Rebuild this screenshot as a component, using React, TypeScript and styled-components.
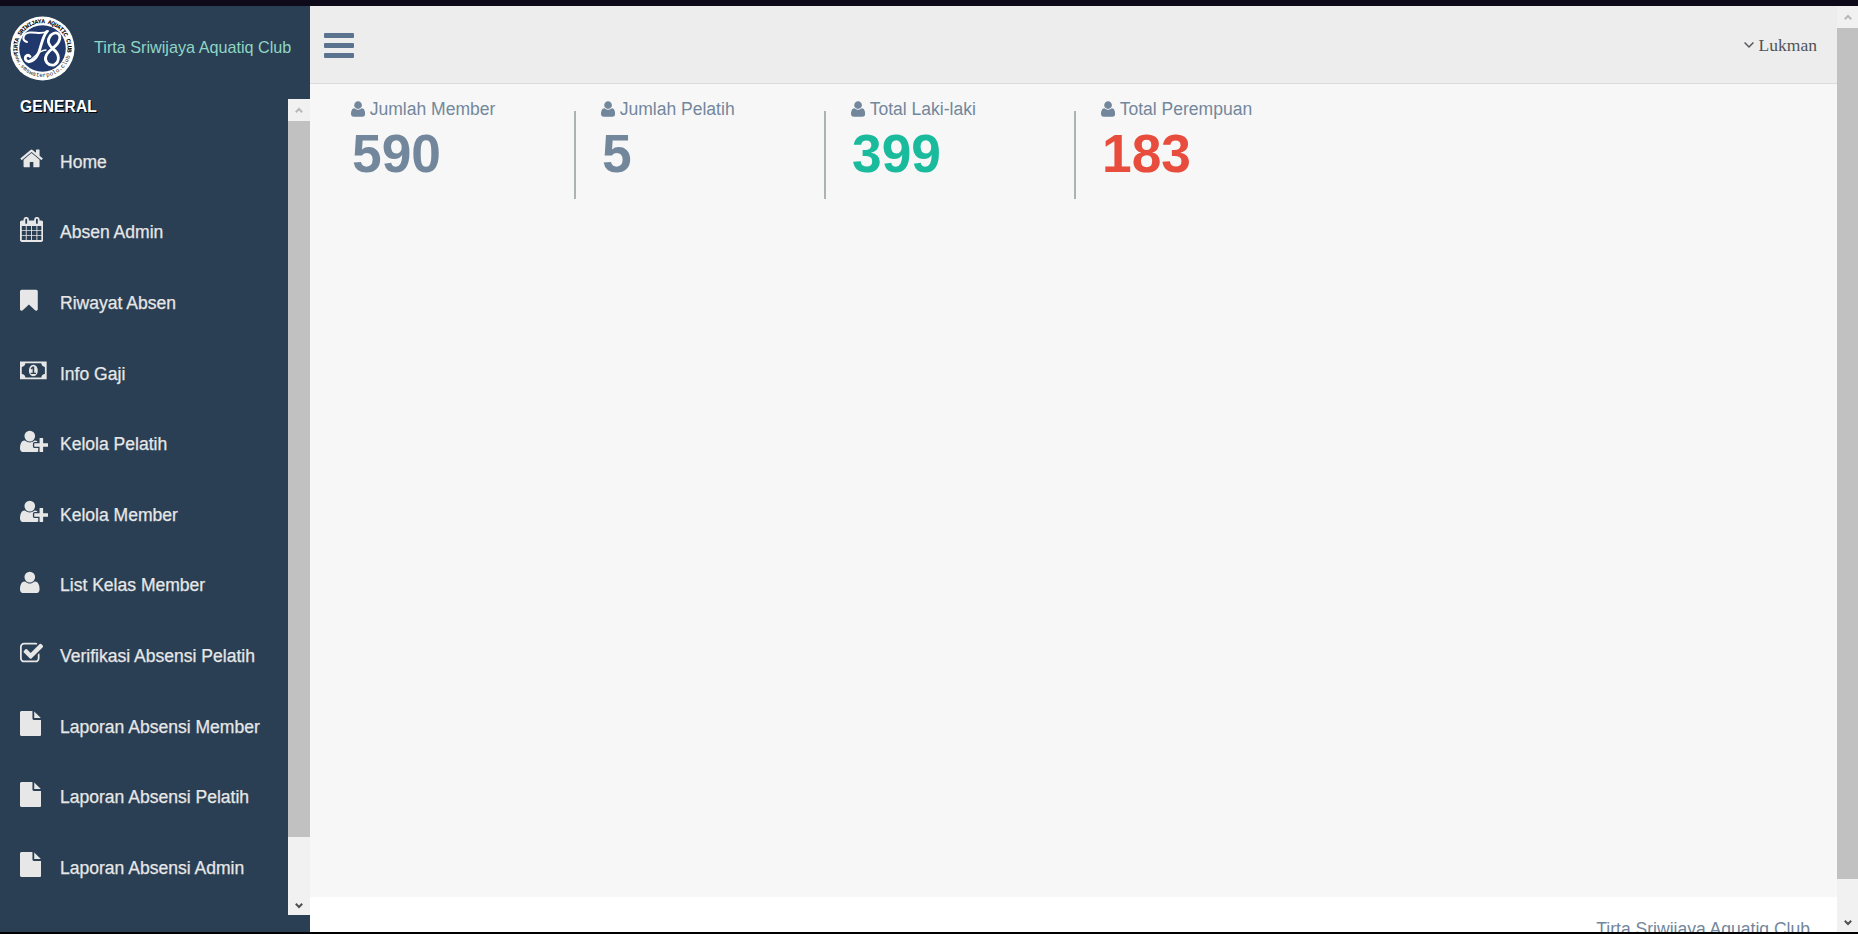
import React from "react";
import styled, { createGlobalStyle } from "styled-components";

const GlobalStyle = createGlobalStyle`
  * { box-sizing: border-box; }
  html, body { margin: 0; padding: 0; }
  body {
    height: 934px;
    overflow: hidden;
    font-family: "Liberation Sans", Arial, sans-serif;
    font-size: 17.55px;
    color: #73879c;
    background: #000;
  }
`;

const Screen = styled.div`
  display: flex;
  width: 1858px;
  height: 934px;
  border-top: 6px solid #0e0a1a;
  border-bottom: 2px solid #000;
  overflow: hidden;
`;

const Sidebar = styled.aside`
  display: flex;
  flex-direction: column;
  flex: none;
  width: 310px;
  background: #2a3f54;
`;

const Brand = styled.div`
  display: flex;
  align-items: center;
  gap: 19px;
  height: 93px;
  padding: 0 0 8px 10px;
`;

const BrandName = styled.span`
  font-size: 16.2px;
  line-height: 20px;
  color: #8fd6c4;
  white-space: nowrap;
  margin-top: -4px;
`;

const MenuArea = styled.div`
  display: flex;
  height: 816px;
`;

const Menu = styled.nav`
  flex: 1;
  min-width: 0;
  margin-top: -5px;
`;

const MenuTitle = styled.h3`
  margin: 0;
  padding-left: 20px;
  height: 32.5px;
  font-size: 15.6px;
  line-height: 26px;
  letter-spacing: 0.1px;
  font-weight: bold;
  color: #fff;
  text-shadow: 1px 1px #000;
`;

const MenuItem = styled.a`
  display: flex;
  align-items: center;
  height: 70.6px;
  padding-left: 20px;
  color: #e7e7e7;
  white-space: nowrap;
`;

const IconSlot = styled.span`
  display: flex;
  width: 40px;
  margin-top: -6px;
`;

const MenuLabel = styled.span`
  line-height: 24px;
  -webkit-text-stroke: 0.25px currentColor;
`;

const Glyph = styled.svg<{ $w: number; $h: number }>`
  display: block;
  flex: none;
  width: ${(p) => p.$w}px;
  height: ${(p) => p.$h}px;
  fill: currentColor;
`;

const Scrollbar = styled.div<{ $w: number }>`
  display: flex;
  flex-direction: column;
  flex: none;
  width: ${(p) => p.$w}px;
  background: #f1f1f1;
`;

const ScrollArrow = styled.div<{ $active?: boolean }>`
  display: flex;
  align-items: center;
  justify-content: center;
  height: ${(p) => (p.$active ? 19 : 22)}px;
  color: ${(p) => (p.$active ? "#505050" : "#b8b8b8")};
`;

const ScrollThumb = styled.div<{ $h: number }>`
  height: ${(p) => p.$h}px;
  margin-bottom: auto;
  background: #c1c1c1;
`;

const Main = styled.main`
  display: flex;
  flex-direction: column;
  flex: 1;
  min-width: 0;
  overflow: hidden;
  background: #f7f7f7;
`;

const TopNav = styled.header`
  display: flex;
  justify-content: space-between;
  align-items: center;
  flex: none;
  height: 78px;
  padding: 1px 20px 0 14px;
  background: #ededed;
  border-bottom: 1px solid #d9dbdd;
`;

const UserMenu = styled.div`
  display: flex;
  align-items: center;
  gap: 5px;
  margin-top: -1px;
  color: #515356;
  font-family: "Liberation Serif", "Times New Roman", serif;
  font-size: 17.55px;
  line-height: 22px;
`;

const Stats = styled.section`
  display: flex;
  flex: 1;
  padding: 12px 0 0 27px;
`;

const Stat = styled.div`
  position: relative;
  width: 250px;
  padding-left: 14px;
  & + &::before {
    content: "";
    position: absolute;
    left: -13px;
    top: 15px;
    width: 2px;
    height: 88px;
    background: #adb2b5;
  }
`;

const StatLabel = styled.div`
  display: flex;
  align-items: center;
  gap: 4.5px;
  height: 26px;
  white-space: nowrap;
`;

const StatValue = styled.div<{ $color?: string }>`
  padding-left: 1px;
  font-size: 53.3px;
  line-height: 64px;
  font-weight: bold;
  color: ${(p) => p.$color || "#73879c"};
`;

const Footer = styled.footer`
  flex: none;
  height: 35px;
  padding: 20px 27px 0 0;
  background: #fff;
  text-align: right;
  line-height: 24px;
  overflow: hidden;
`;

type IconName = "home" | "calendar" | "bookmark" | "money" | "userPlus" | "user" | "check" | "file";

const icons: Record<IconName, { x: number; w: number; d: string }> = {
  home: {
    x: 64, w: 1664,
    d: "M1472 992v480q0 26-19 45t-45 19h-384v-384h-256v384h-384q-26 0-45-19t-19-45v-480q0-1 .5-3t.5-3l575-474 575 474q1 2 1 6zm223-69l-62 74q-8 9-21 11h-3q-13 0-21-7l-692-577-692 577q-12 8-24 7-13-2-21-11l-62-74q-8-10-7-23.5t11-21.5l719-599q32-26 76-26t76 26l244 204v-195q0-14 9-23t23-9h192q14 0 23 9t9 23v408l219 182q10 8 11 21.5t-7 23.5z",
  },
  calendar: {
    x: 64, w: 1664,
    d: "M192 1664h288v-288h-288v288zm352 0h320v-288h-320v288zm-352-352h288v-320h-288v320zm352 0h320v-320h-320v320zm-352-384h288v-288h-288v288zm736 736h320v-288h-320v288zm-384-736h320v-288h-320v288zm768 736h288v-288h-288v288zm-384-352h320v-320h-320v320zm-352-864v-288q0-13-9.5-22.5t-22.5-9.5h-64q-13 0-22.5 9.5t-9.5 22.5v288q0 13 9.5 22.5t22.5 9.5h64q13 0 22.5-9.5t9.5-22.5zm736 864h288v-320h-288v320zm-384-384h320v-288h-320v288zm384 0h288v-288h-288v288zm32-480v-288q0-13-9.5-22.5t-22.5-9.5h-64q-13 0-22.5 9.5t-9.5 22.5v288q0 13 9.5 22.5t22.5 9.5h64q13 0 22.5-9.5t9.5-22.5zm384-64v1280q0 52-38 90t-90 38h-1408q-52 0-90-38t-38-90v-1280q0-52 38-90t90-38h128v-96q0-66 47-113t113-47h64q66 0 113 47t47 113v96h384v-96q0-66 47-113t113-47h64q66 0 113 47t47 113v96h128q52 0 90 38t38 90z",
  },
  bookmark: {
    x: 256, w: 1280,
    d: "M1420 128q23 0 44 9 33 13 52.5 41t19.5 62v1289q0 34-19.5 62t-52.5 41q-19 8-44 8-48 0-83-32l-441-424-441 424q-36 33-83 33-23 0-44-9-33-13-52.5-41t-19.5-62v-1289q0-34 19.5-62t52.5-41q21-9 44-9h1048z",
  },
  money: {
    x: 0, w: 1920,
    d: "M0 256h1920v1280H0zM384 384q0 106-75 181t-181 75v512q106 0 181 75t75 181h1152q0-106 75-181t181-75V640q-106 0-181-75t-75-181zM960 480q150 0 235 125t85 291-85 291-235 125-235-125-85-291 85-291 235-125zM768 1152h384v-96h-128V608h-114L762 745l77 80 69-62v293H768z",
  },
  userPlus: {
    x: 0, w: 2048,
    d: "M704 896q-159 0-271.5-112.5t-112.5-271.5 112.5-271.5 271.5-112.5 271.5 112.5 112.5 271.5-112.5 271.5-271.5 112.5zm960 128h352q13 0 22.5 9.5t9.5 22.5v192q0 13-9.5 22.5t-22.5 9.5h-352v352q0 13-9.5 22.5t-22.5 9.5h-192q-13 0-22.5-9.5t-9.5-22.5v-352h-352q-13 0-22.5-9.5t-9.5-22.5v-192q0-13 9.5-22.5t22.5-9.5h352v-352q0-13 9.5-22.5t22.5-9.5h192q13 0 22.5 9.5t9.5 22.5v352zm-736 224q0 52 38 90t90 38h256v238q-68 50-171 50h-874q-121 0-194-69t-73-190q0-53 3.5-103.5t14-109 26.5-108.5 43-97.5 62-81 85.5-53.5 111.5-20q19 0 39 17 79 61 154.5 91.5t164.5 30.5 164.5-30.5 154.5-91.5q20-17 39-17 132 0 217 96h-223q-52 0-90 38t-38 90v192z",
  },
  user: {
    x: 192, w: 1408,
    d: "M1600 1405q0 120-73 189.5t-194 69.5h-874q-121 0-194-69.5t-73-189.5q0-53 3.5-103.5t14-109 26.5-108.5 43-97.5 62-81 85.5-53.5 111.5-20q9 0 42 21.5t74.5 48 108 48 133.5 21.5 133.5-21.5 108-48 74.5-48 42-21.5q61 0 111.5 20t85.5 53.5 62 81 43 97.5 26.5 108.5 14 109 3.5 103.5zm-320-893q0 159-112.5 271.5t-271.5 112.5-271.5-112.5-112.5-271.5 112.5-271.5 271.5-112.5 271.5 112.5 112.5 271.5z",
  },
  check: {
    x: 64, w: 1664,
    d: "M1472 930v318q0 119-84.5 203.5t-203.5 84.5h-832q-119 0-203.5-84.5t-84.5-203.5v-832q0-119 84.5-203.5t203.5-84.5h832q63 0 117 25 15 7 18 23 3 17-9 29l-49 49q-10 10-23 10-3 0-9-2-23-6-45-6h-832q-66 0-113 47t-47 113v832q0 66 47 113t113 47h832q66 0 113-47t47-113v-254q0-13 9-22l64-64q10-10 23-10 6 0 12 3 20 8 20 29zm231-489l-814 814q-24 24-57 24t-57-24l-430-430q-24-24-24-57t24-57l110-110q24-24 57-24t57 24l263 263 647-647q24-24 57-24t57 24l110 110q24 24 24 57t-24 57z",
  },
  file: {
    x: 128, w: 1536,
    d: "M1152 512v-472q22 14 36 28l408 408q14 14 28 36h-472zm-128 32q0 40 28 68t68 28h544v1056q0 40-28 68t-68 28h-1344q-40 0-68-28t-28-68v-1600q0-40 28-68t68-28h800v544z",
  },
};

function Icon({ name, size = 24.9 }: { name: IconName; size?: number }) {
  const { x, w, d } = icons[name];
  return (
    <Glyph $w={(w * size) / 1792} $h={size} viewBox={`${x} 0 ${w} 1792`}>
      <path d={d} fillRule={name === "money" ? "evenodd" : "nonzero"} />
    </Glyph>
  );
}

function Chevron({ up }: { up?: boolean }) {
  return (
    <Glyph $w={8} $h={6} viewBox="0 0 8 6">
      <path
        d={up ? "M0.8 5.2 4 2l3.2 3.2" : "M0.8 0.8 4 4l3.2-3.2"}
        fill="none"
        stroke="currentColor"
        strokeWidth="2"
      />
    </Glyph>
  );
}

function Logo() {
  return (
    <Glyph $w={65} $h={65} viewBox="0 0 65 65">
      <defs>
        <path id="ringTop" d="M8.3 38.5A25 25 0 1 1 56.7 38.5" />
        <path id="ringBottom" d="M4.2 37A28.7 28.7 0 0 0 60.8 37" />
      </defs>
      <circle cx="32.5" cy="32.5" r="32" fill="#fff" />
      <circle cx="32.5" cy="32.5" r="23.3" fill="#20386b" />
      <text fontFamily="Liberation Mono, monospace" fontWeight="bold" fontSize="6.2" fill="#000">
        <textPath href="#ringTop" textLength="89">TIRTA SRIWIJAYA AQUATIC CLUB</textPath>
      </text>
      <text fontFamily="Liberation Mono, monospace" fontSize="5.8" fill="#222">
        <textPath href="#ringBottom" textLength="77">www.smswaterpolo.club</textPath>
      </text>
      <g fill="none" stroke="#fff" strokeLinecap="round" strokeLinejoin="round">
        <path d="M17 26C11 24 13 17 20 16.500C27 16 31 19 38 15" strokeWidth="2" />
        <path d="M37 15.500C32 21 31 32 28 38C25 45 18 48 15.500 43.500C14.500 40 18 38 20 40.500" strokeWidth="2.8" />
        <path d="M49 25C52 18 46 14.500 41 19C36 25 39 29 43 33C50 38 50 46 44 49C38 50 34 45 36 40C38 34 47 31 49 25" strokeWidth="2.8" />
        <path d="M18 45C25 43 26 35 36 34" strokeWidth="1.300" />
      </g>
    </Glyph>
  );
}

const menu: { icon: IconName; label: string }[] = [
  { icon: "home", label: "Home" },
  { icon: "calendar", label: "Absen Admin" },
  { icon: "bookmark", label: "Riwayat Absen" },
  { icon: "money", label: "Info Gaji" },
  { icon: "userPlus", label: "Kelola Pelatih" },
  { icon: "userPlus", label: "Kelola Member" },
  { icon: "user", label: "List Kelas Member" },
  { icon: "check", label: "Verifikasi Absensi Pelatih" },
  { icon: "file", label: "Laporan Absensi Member" },
  { icon: "file", label: "Laporan Absensi Pelatih" },
  { icon: "file", label: "Laporan Absensi Admin" },
];

const stats = [
  { label: "Jumlah Member", value: 590 },
  { label: "Jumlah Pelatih", value: 5 },
  { label: "Total Laki-laki", value: 399, color: "#1abb9c" },
  { label: "Total Perempuan", value: 183, color: "#e74c3c" },
];

export default function App() {
  return (
    <>
      <GlobalStyle />
      <Screen>
        <Sidebar>
          <Brand>
            <Logo />
            <BrandName>Tirta Sriwijaya Aquatiq Club</BrandName>
          </Brand>
          <MenuArea>
            <Menu>
              <MenuTitle>GENERAL</MenuTitle>
              {menu.map((m) => (
                <MenuItem key={m.label}>
                  <IconSlot>
                    <Icon name={m.icon} />
                  </IconSlot>
                  <MenuLabel>{m.label}</MenuLabel>
                </MenuItem>
              ))}
            </Menu>
            <Scrollbar $w={22}>
              <ScrollArrow><Chevron up /></ScrollArrow>
              <ScrollThumb $h={716} />
              <ScrollArrow $active><Chevron /></ScrollArrow>
            </Scrollbar>
          </MenuArea>
        </Sidebar>
        <Main>
          <TopNav>
            <Glyph $w={30} $h={25} viewBox="0 0 30 25" color="#5a738e">
              <rect width="30" height="5" rx="1" />
              <rect y="10" width="30" height="5" rx="1" />
              <rect y="20" width="30" height="5" rx="1" />
            </Glyph>
            <UserMenu>
              <Glyph $w={10} $h={6} viewBox="0 0 10 6">
                <path d="M0.6 0.6 5 5 9.4 0.6" fill="none" stroke="currentColor" strokeWidth="1.4" />
              </Glyph>
              Lukman
            </UserMenu>
          </TopNav>
          <Stats>
            {stats.map((s) => (
              <Stat key={s.label}>
                <StatLabel>
                  <Icon name="user" size={18} />
                  {s.label}
                </StatLabel>
                <StatValue $color={s.color}>{s.value}</StatValue>
              </Stat>
            ))}
          </Stats>
          <Footer>Tirta Sriwijaya Aquatiq Club</Footer>
        </Main>
        <Scrollbar $w={21}>
          <ScrollArrow><Chevron up /></ScrollArrow>
          <ScrollThumb $h={851} />
          <ScrollArrow $active><Chevron /></ScrollArrow>
        </Scrollbar>
      </Screen>
    </>
  );
}
